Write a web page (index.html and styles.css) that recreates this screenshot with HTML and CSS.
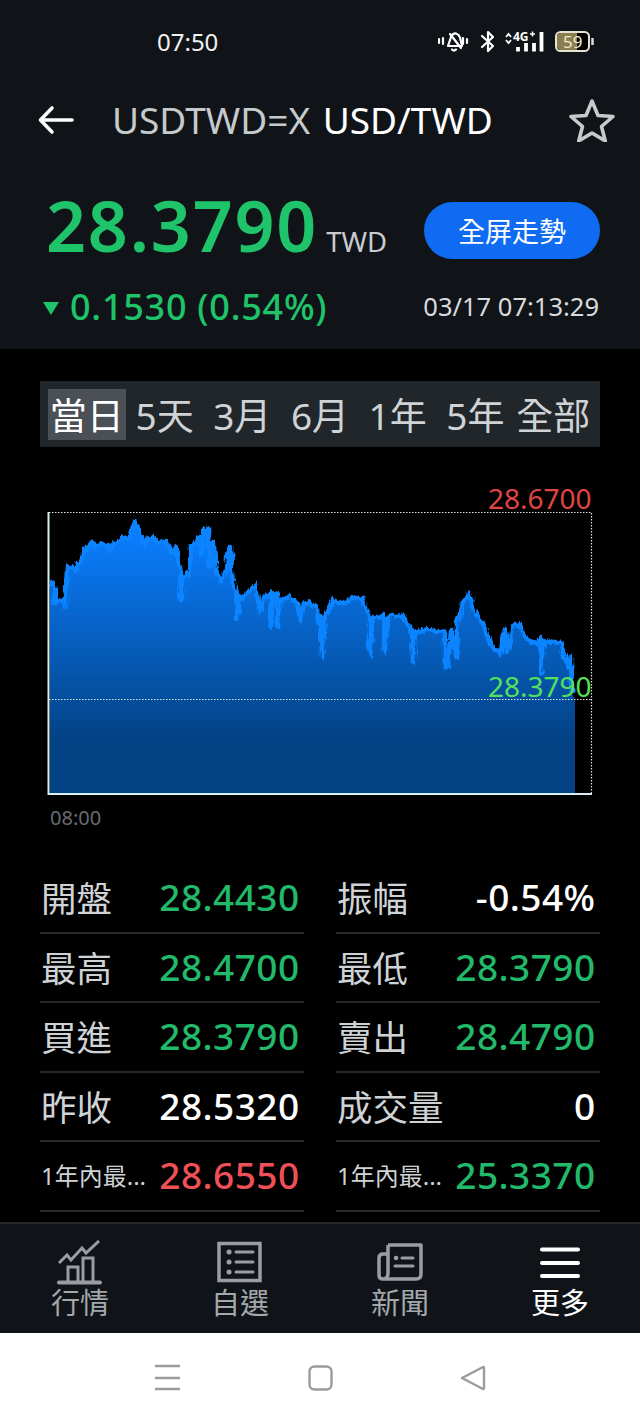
FILE: index.html
```html
<!DOCTYPE html>
<html lang="zh-Hant">
<head>
<meta charset="utf-8">
<title>USDTWD=X</title>
<link rel="stylesheet" href="styles.css">
</head>
<body>
<div class="page">
  <header class="top">
    <div class="status">
      <span class="time">07:50</span>
      <svg class="status-icons" width="160" height="34" viewBox="438 26 160 34" fill="none" stroke="#fff">
        <g stroke-width="2.200" stroke-linecap="round" stroke-linejoin="round">
          <path d="M439 40v4M443 39v6M463 39v6M467 40v4" />
          <path d="M448 47l3-9q2-4 5-3.500q3 1 4 4l2 8.500z" />
          <path d="M450 35l11 14M452 50.500q2 2 4 0" />
          <path d="M482 37l11 10-5 5V33l5 5-11 10" />
        </g>
        <path d="M506 38l2.500-3 2.500 3M506 41l2.500 3 2.500-3" stroke-width="1.800" />
        <text class="net" x="513" y="42">4G</text>
        <path d="M530 35h5M532.500 32.500v5" stroke-width="1.500" />
        <g stroke-width="3.800">
          <path d="M518 48v4.500M526 44v8.500M534 44v8.500M541.500 33v19.500" />
        </g>
        <rect x="556" y="33" width="33" height="19" rx="4.500" fill="#000" stroke="#e6e2d0" stroke-width="2" />
        <path d="M557 38q0-4 4-4h16v17h-16q-4 0-4-4z" fill="#8a7d50" stroke="none" />
        <path d="M592.500 39v7" stroke-width="2.500" stroke="#ddd" />
        <text class="batt" x="563" y="48.500">59</text>
      </svg>
    </div>
    <div class="title-row">
      <svg class="back" width="36" height="30" viewBox="0 0 36 30" fill="none" stroke="#fff" stroke-width="3.600" stroke-linecap="round" stroke-linejoin="round">
        <path d="M34 15H3M14 3L2.500 15 14 27" />
      </svg>
      <h1 class="title"><span class="sym">USDTWD=X</span> USD/TWD</h1>
      <svg class="star" width="46" height="44" viewBox="0 0 46 44" fill="none" stroke="#c6cacd" stroke-width="3.600" stroke-linejoin="round">
        <path d="M23 3l6 14.500 15 1-11.500 10 3.800 14.500L23 35l-13.300 8 3.800-14.500L2 18.500l15-1z" />
      </svg>
    </div>
    <div class="price-row">
      <div class="price-wrap"><span class="price">28.3790</span><span class="ccy">TWD</span></div>
      <button class="full-btn" type="button">全屏走勢</button>
    </div>
    <div class="change-row">
      <div class="change"><span class="tri"></span>0.1530 (0.54%)</div>
      <span class="stamp">03/17 07:13:29</span>
    </div>
  </header>

  <main class="main">
    <nav class="ranges">
      <span class="range range-on">當日</span>
      <span class="range">5天</span>
      <span class="range">3月</span>
      <span class="range">6月</span>
      <span class="range">1年</span>
      <span class="range">5年</span>
      <span class="range">全部</span>
    </nav>

    <div class="chart">
      <svg class="plot" width="640" height="384" viewBox="0 480 640 384" fill="none">
        <defs>
          <linearGradient id="area" gradientUnits="userSpaceOnUse" x1="0" y1="530" x2="0" y2="740">
            <stop offset="0" stop-color="#0a7eff" />
            <stop offset="1" stop-color="#034285" />
          </linearGradient>
          <filter id="jag" filterUnits="userSpaceOnUse" x="40" y="500" width="545" height="220">
            <feTurbulence type="fractalNoise" baseFrequency="0.35 0.08" numOctaves="2" seed="4" result="n" />
            <feDisplacementMap in="SourceGraphic" in2="n" scale="7" xChannelSelector="R" yChannelSelector="G" />
          </filter>
        </defs>
        <path fill="url(#area)" d="M50 583L54 585 55 603 60 600 64 600 65 607 67 567 72 567 75 570 77 563 80 563 85 548 87 550 92 543 95 547 100 543 105 545 108 545 110 550 113 543 120 542 123 537 127 538 129 540 132 530 135 522 138 530 142 537 145 545 147 539 153 538 158 542 165 542 172 552 176 548 178 560 181 572 180 600 182 600 183 578 190 572 191 545 197 543 198 537 200 537 201 555 203 530 208 528 209 565 211 565 212 543 214 543 215 565 218 575 220 582 227 570 229 546 231 546 232 572 233 583 238 602 237 618 240 600 243 597 250 590 256 585 258 600 260 612 263 598 270 594 271 626 273 592 277 594 278 626 280 600 290 597 297 603 300 620 303 604 310 602 317 608 318 622 320 617 322 658 325 617 333 600 340 603 347 603 350 598 362 598 370 617 370 657 373 618 383 615 385 652 387 617 403 615 412 632 413 662 415 633 427 629 445 632 445 668 448 667 451 630 457 658 457 623 463 603 469 593 475 613 483 623 490 643 500 655 505 630 508 652 513 625 520 625 527 640 537 643 540 638 541 673 543 640 560 643 568 667 571 658 572 693 575 700 575 793 50 793z" />
        <path class="trace" stroke="#0a84ff" stroke-width="4.500" stroke-linejoin="round" d="M50 583L54 585 55 603 60 600 64 600 65 607 67 567 72 567 75 570 77 563 80 563 85 548 87 550 92 543 95 547 100 543 105 545 108 545 110 550 113 543 120 542 123 537 127 538 129 540 132 530 135 522 138 530 142 537 145 545 147 539 153 538 158 542 165 542 172 552 176 548 178 560 181 572 180 600 182 600 183 578 190 572 191 545 197 543 198 537 200 537 201 555 203 530 208 528 209 565 211 565 212 543 214 543 215 565 218 575 220 582 227 570 229 546 231 546 232 572 233 583 238 602 237 618 240 600 243 597 250 590 256 585 258 600 260 612 263 598 270 594 271 626 273 592 277 594 278 626 280 600 290 597 297 603 300 620 303 604 310 602 317 608 318 622 320 617 322 658 325 617 333 600 340 603 347 603 350 598 362 598 370 617 370 657 373 618 383 615 385 652 387 617 403 615 412 632 413 662 415 633 427 629 445 632 445 668 448 667 451 630 457 658 457 623 463 603 469 593 475 613 483 623 490 643 500 655 505 630 508 652 513 625 520 625 527 640 537 643 540 638 541 673 543 640 560 643 568 667 571 658 572 693" filter="url(#jag)" />
        <path stroke="#dfe6e6" stroke-width="1.200" stroke-dasharray="1.500 1.500" d="M49 512.500H591.500V793M49 699.500H591" />
        <path stroke="#d8eef0" stroke-width="2" d="M48.500 512V794H592" />
      </svg>
      <span class="hi-label">28.6700</span>
      <span class="lo-label">28.3790</span>
      <span class="t-label">08:00</span>
    </div>

    <section class="stats">
      <div class="stat"><span class="k">開盤</span><span class="v up">28.4430</span></div>
      <div class="stat"><span class="k">振幅</span><span class="v flat">-0.54%</span></div>
      <div class="stat"><span class="k">最高</span><span class="v up">28.4700</span></div>
      <div class="stat"><span class="k">最低</span><span class="v up">28.3790</span></div>
      <div class="stat"><span class="k">買進</span><span class="v up">28.3790</span></div>
      <div class="stat"><span class="k">賣出</span><span class="v up">28.4790</span></div>
      <div class="stat"><span class="k">昨收</span><span class="v flat">28.5320</span></div>
      <div class="stat"><span class="k">成交量</span><span class="v flat">0</span></div>
      <div class="stat"><span class="k k-sm">1年內最...</span><span class="v down">28.6550</span></div>
      <div class="stat"><span class="k k-sm">1年內最...</span><span class="v up">25.3370</span></div>
    </section>
  </main>

  <nav class="tabs">
    <div class="tab">
      <svg class="tab-icon" width="60" height="46" viewBox="50 1240 60 46" fill="none" stroke="#9a9ea3" stroke-width="3">
        <path d="M59 1263l8-8 4 5 11-12 4 5 13-12" />
        <path d="M68 1282v-15h10v15M83 1282v-24h10v24" />
        <path d="M59 1282.500h41" stroke-width="4" stroke-linecap="round" />
      </svg>
      <span class="tab-label">行情</span>
    </div>
    <div class="tab">
      <svg class="tab-icon" width="60" height="46" viewBox="210 1240 60 46" fill="none" stroke="#9a9ea3" stroke-width="3.500">
        <rect x="219" y="1243.500" width="41" height="37" />
        <path d="M236 1252h17M236 1262h17M236 1272h17" stroke-width="3" stroke-linecap="round" />
        <path d="M229 1252h.1M229 1262h.1M229 1272h.1" stroke-width="5" stroke-linecap="round" />
      </svg>
      <span class="tab-label">自選</span>
    </div>
    <div class="tab">
      <svg class="tab-icon" width="60" height="46" viewBox="370 1240 60 46" fill="none" stroke="#9a9ea3" stroke-width="3.500">
        <path d="M388 1245h33v29q0 5-5 5h-33q-4 0-4-4v-17q0-4 4-4h5M388 1245v28q0 6-5 6" stroke-linejoin="round" />
        <path d="M402 1258h11M395 1266h18" stroke-width="3" stroke-linecap="round" />
        <path d="M396 1258h.1" stroke-width="4.500" stroke-linecap="round" />
      </svg>
      <span class="tab-label">新聞</span>
    </div>
    <div class="tab tab-on">
      <svg class="tab-icon" width="60" height="46" viewBox="530 1240 60 46" fill="none" stroke="#fff" stroke-width="4" stroke-linecap="round">
        <path d="M542 1249.500h36M542 1263h36M542 1276h36" />
      </svg>
      <span class="tab-label">更多</span>
    </div>
  </nav>

  <footer class="sysnav">
    <svg width="640" height="89" viewBox="0 1333 640 89" fill="none" stroke="#9b9b9b" stroke-width="2.400" stroke-linejoin="round">
      <path d="M155 1366h25M155 1378h25M155 1389h25" />
      <rect x="309.500" y="1366.500" width="22" height="23" rx="5" />
      <path d="M462 1378l21-11q1-.5 1 1v20q0 1.500-1 1z" />
    </svg>
  </footer>
</div>
</body>
</html>
```

FILE: styles.css
```css
* { box-sizing: border-box; }
html, body { margin: 0; padding: 0; }
body {
  width: 640px;
  height: 1422px;
  background: #000;
  font-family: "Noto Sans", "Noto Sans CJK TC", sans-serif;
  overflow: hidden;
}
.page { display: flex; flex-direction: column; height: 1422px; }

.top { height: 349px; background: #101418; flex: none; color: #fff; }
.status { height: 84px; display: flex; align-items: center; justify-content: space-between; padding: 0 42px 2px 157px; }
.time { font-size: 24px; color: #f2f2f2; }
.status-icons { margin-top: 2px; }
.net { font: 700 12px "Noto Sans", sans-serif; fill: #fff; stroke: none; }
.batt { font: 400 17px "Noto Sans", sans-serif; fill: #efe9c9; stroke: none; }

.title-row { height: 72px; display: flex; align-items: center; padding: 0 25px 2px 38px; }
.back { flex: none; margin-top: 2px; }
.title { flex: 1; margin: 0 0 0 38px; font-size: 37px; font-weight: 400; color: #fff; white-space: nowrap; word-spacing: 3px; }
.sym { color: #c6cacd; }
.star { flex: none; margin-top: 2px; }

.price-row { height: 64px; margin-top: 38px; display: flex; align-items: center; justify-content: space-between; padding: 0 40px 0 46px; }
.price-wrap { display: flex; align-items: baseline; }
.price { font-size: 70px; font-weight: 600; line-height: 64px; color: #1fc36a; letter-spacing: 1.800px; }
.ccy { margin-left: 8px; font-size: 27.500px; color: #c8ccd0; }
.full-btn { width: 176px; height: 57px; margin-top: 9px; border: 0; border-radius: 29px; background: #0f6cf2; color: #fff; font: 400 27px "Noto Sans", "Noto Sans CJK TC", sans-serif; }

.change-row { display: flex; align-items: center; justify-content: space-between; height: 50px; margin-top: 23px; padding: 0 41px 0 43px; }
.change { display: flex; align-items: center; font-size: 36px; font-weight: 500; color: #1fc36a; white-space: nowrap; letter-spacing: .75px; }
.tri { width: 0; height: 0; margin: 4px 11px 0 0; border-left: 8px solid transparent; border-right: 8px solid transparent; border-top: 13px solid #1fc36a; }
.stamp { font-size: 25.500px; color: #d8dbde; }

.main { flex: 1; min-height: 0; background: #000; }
.ranges { display: grid; grid-template-columns: repeat(7, 1fr); height: 66px; margin: 32px 40px 0; padding: 8px 8px 7px; background: #21262b; }
.range { display: flex; align-items: center; justify-content: center; padding-top: 2px; font-size: 37px; color: #cfd3d6; white-space: nowrap; line-height: 1; }
.range-on { background: #4a5056; color: #fff; }

.chart { position: relative; height: 417px; padding-top: 33px; }
.plot { display: block; }
.hi-label, .lo-label, .t-label { position: absolute; line-height: 1; white-space: nowrap; }
.hi-label { top: 37px; left: 488px; font-size: 28px; color: #e04545; }
.lo-label { top: 225px; left: 488px; font-size: 28px; color: #54e05a; }
.t-label { top: 361px; left: 50px; font-size: 20px; color: #686c70; }

.stats { display: grid; grid-template-columns: 264px 264px; column-gap: 32px; margin: 0 40px; }
.stat { display: flex; align-items: center; justify-content: space-between; height: 69.500px; padding: 0 4.500px 2px 1px; border-bottom: 2px solid #24282c; }
.k { font-size: 35.500px; color: #cfd3d6; white-space: nowrap; }
.k-sm { font-size: 24px; }
.v { font-size: 37px; font-weight: 500; letter-spacing: .45px; white-space: nowrap; }
.up { color: #22b96a; }
.down { color: #ee5058; }
.flat { color: #fff; }

.tabs { flex: none; height: 111px; background: #101418; border-top: 2px solid #24282c; display: grid; grid-template-columns: repeat(4, 1fr); }
.tab { display: flex; flex-direction: column; align-items: center; padding-top: 16px; color: #a4a8ac; }
.tab-on { color: #fff; }
.tab-icon { display: block; flex: none; }
.tab-label { font-size: 29px; line-height: 30px; margin-top: 2px; }

.sysnav { flex: none; height: 89px; background: #fff; }
.sysnav svg { display: block; }
```
